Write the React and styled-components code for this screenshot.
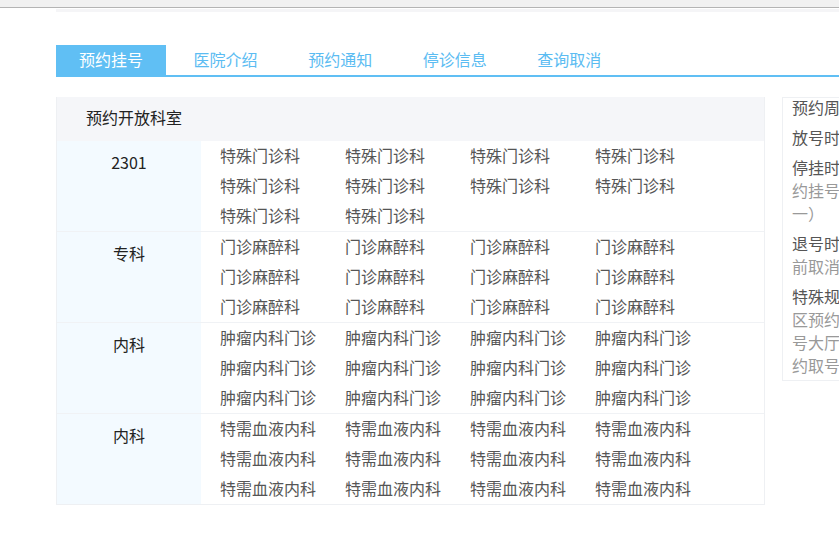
import React from "react";
import styled, { createGlobalStyle } from "styled-components";

const GlobalStyle = createGlobalStyle`
  html, body {
    margin: 0;
    padding: 0;
    background: #fff;
  }
  body {
    font-family: "Noto Sans CJK SC", "Noto Sans", sans-serif;
    font-size: 16px;
    overflow: hidden;
  }
`;

const Page = styled.div`
  width: 100%;
  overflow: hidden;
`;

const TopBar = styled.div`
  height: 7px;
  background: #f1f1f1;
  border-bottom: 1px solid #b4b4b4;
`;

const Main = styled.div`
  margin: 1px 0 0 56px;
  width: 1100px;
  border-top: 3px solid #f5f5f7;
`;

const TabBar = styled.ul`
  display: flex;
  margin: 33px 0 0;
  padding: 0;
  list-style: none;
  height: 30px;
  border-bottom: 2px solid #60bff4;
`;

const Tab = styled.li`
  width: 110px;
  margin-right: 4.6px;
  height: 30px;
  line-height: 29px;
  text-align: center;
  font-size: 16px;
  cursor: pointer;
  color: ${(p) => (p.$active ? "#fff" : "#5bbcf2")};
  background: ${(p) => (p.$active ? "#60bff4" : "transparent")};
`;

const Content = styled.div`
  display: flex;
  align-items: flex-start;
  gap: 17px;
  margin-top: 20px;
`;

const Table = styled.div`
  width: 707px;
  border: 1px solid #eef0f3;
  border-top: none;
`;

const TableHeader = styled.div`
  height: 44px;
  line-height: 41px;
  padding-left: 29px;
  background: #f5f6f9;
  color: #222;
  font-size: 16px;
`;

const Section = styled.div`
  display: grid;
  grid-template-columns: 144px 1fr;
  height: 90px;
  & + & {
    border-top: 1px solid #f0f2f5;
  }
`;

const SectionLabel = styled.div`
  background: #f3faff;
  text-align: center;
  line-height: 42px;
  color: #222;
`;

const ItemGrid = styled.div`
  display: grid;
  grid-template-columns: repeat(4, 125px);
  align-content: start;
  padding-left: 19px;
  margin-top: -1px;
`;

const Item = styled.span`
  line-height: 30px;
  color: #555;
  white-space: nowrap;
  cursor: pointer;
`;

const Notice = styled.div`
  flex: none;
  width: 244px;
  padding: 0 9px 3px;
  border: 1px solid #eef0f3;
`;

const NoticeRow = styled.p`
  margin: 0 0 7px;
  line-height: 23px;
  font-size: 16px;
  &:first-child {
    margin-top: -2px;
  }
  &:last-child {
    margin-bottom: 0;
  }
`;

const NoticeLabel = styled.span`
  color: #555;
`;

const NoticeText = styled.span`
  color: #999;
`;

const tabs = ["预约挂号", "医院介绍", "预约通知", "停诊信息", "查询取消"];

const sections = [
  { label: "2301", name: "特殊门诊科", count: 10 },
  { label: "专科", name: "门诊麻醉科", count: 12 },
  { label: "内科", name: "肿瘤内科门诊", count: 12 },
  { label: "内科", name: "特需血液内科", count: 12 },
];

const notices = [
  { label: "预约周期：", text: "七天" },
  { label: "放号时间：", text: "每日早上八点" },
  {
    label: "停挂时间：",
    text: "就诊前一日下午停止预约挂号（节假日期间顺延至节后周一）",
  },
  { label: "退号时间：", text: "就诊日前一天下午五点前取消预约" },
  {
    label: "特殊规定：",
    text: "老年人及军人等可在院区预约挂号处办理，或可到门诊挂号大厅人工窗口办理，凭身份证预约取号。",
  },
];

export default function App() {
  const [active, setActive] = React.useState(0);

  return (
    <Page>
      <GlobalStyle />
      <TopBar />
      <Main>
        <TabBar>
          {tabs.map((t, i) => (
            <Tab key={t} $active={i === active} onClick={() => setActive(i)}>
              {t}
            </Tab>
          ))}
        </TabBar>
        <Content>
          <Table>
            <TableHeader>预约开放科室</TableHeader>
            {sections.map((s, i) => (
              <Section key={i}>
                <SectionLabel>{s.label}</SectionLabel>
                <ItemGrid>
                  {Array.from({ length: s.count }).map((_, j) => (
                    <Item key={j}>{s.name}</Item>
                  ))}
                </ItemGrid>
              </Section>
            ))}
          </Table>
          <Notice>
            {notices.map((n) => (
              <NoticeRow key={n.label}>
                <NoticeLabel>{n.label}</NoticeLabel>
                <NoticeText>{n.text}</NoticeText>
              </NoticeRow>
            ))}
          </Notice>
        </Content>
      </Main>
    </Page>
  );
}
